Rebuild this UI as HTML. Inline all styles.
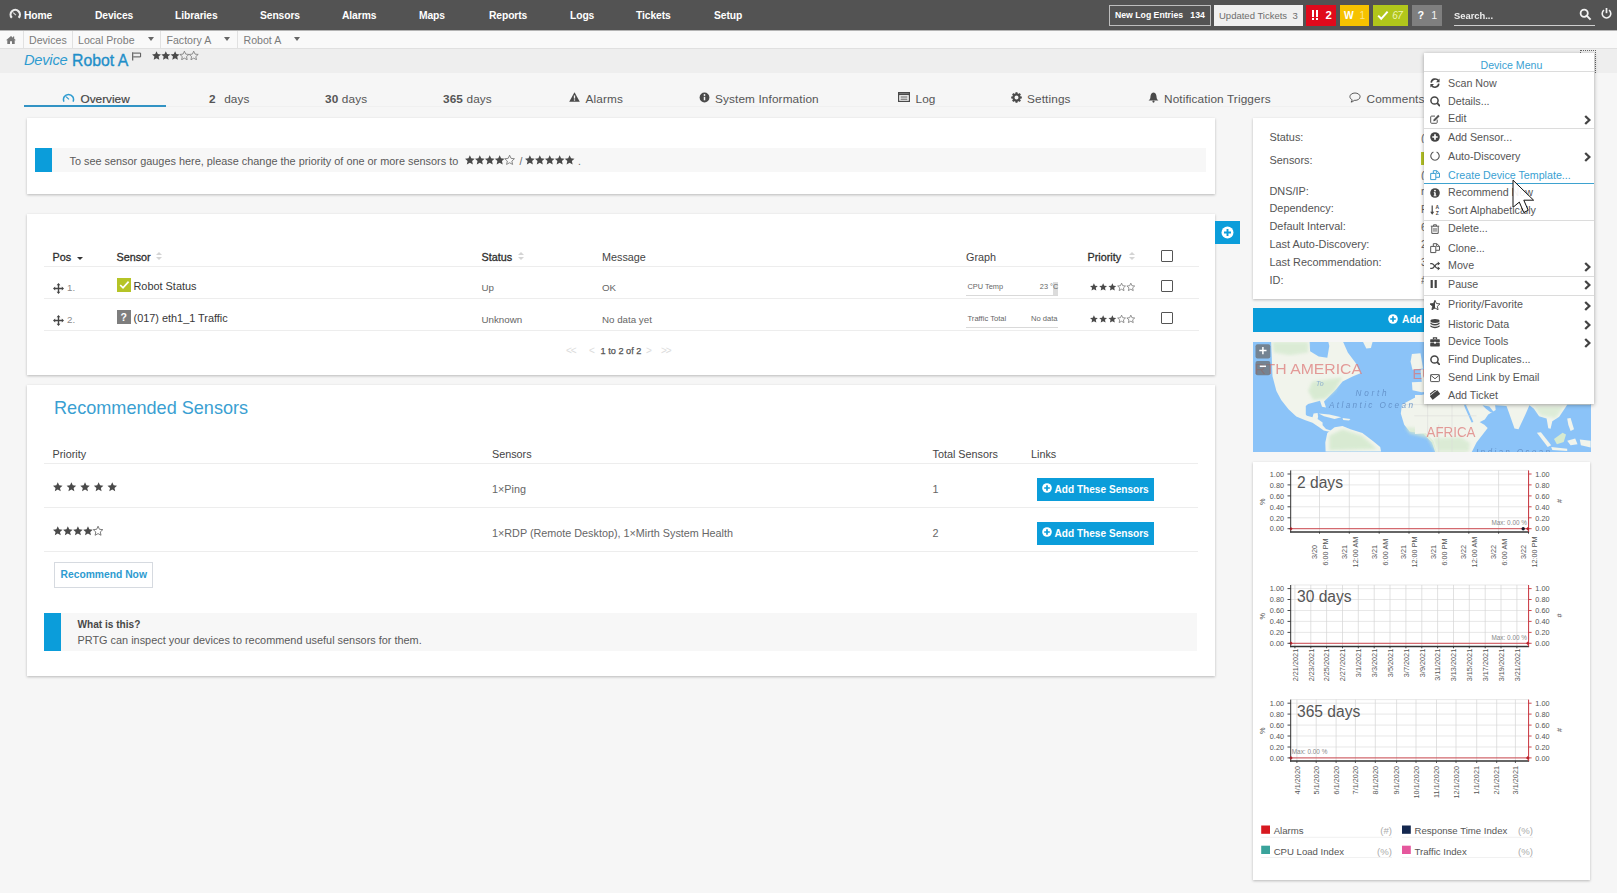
<!DOCTYPE html>
<html>
<head>
<meta charset="utf-8">
<title>Device Robot A</title>
<style>
*{box-sizing:border-box;margin:0;padding:0}
html,body{width:1617px;height:893px;overflow:hidden}
body{font-family:"Liberation Sans",sans-serif;background:#f6f6f6;color:#4d4d4d;font-size:11px;position:relative}
.abs{position:absolute}
.t{position:absolute;white-space:nowrap;line-height:1}
/* top bar */
#topbar{position:absolute;left:0;top:0;width:1617px;height:30px;background:#535353;box-shadow:0 1px 0 #b4b4b4}
#topbar .nav{position:absolute;top:10.6px;color:#fff;font-size:10.3px;font-weight:bold;white-space:nowrap;line-height:1;letter-spacing:-0.1px}
.pill{position:absolute;top:6px;height:19px;font-size:9.5px;line-height:19px;white-space:nowrap;color:#fff;font-weight:bold}
/* breadcrumb */
#crumb{position:absolute;left:0;top:31px;width:1617px;height:18px;background:#f9f9f9;border-bottom:1px solid #e0e0e0}
#crumb .c{position:absolute;top:4.3px;font-size:10.6px;color:#7b7b7b;white-space:nowrap;line-height:1}
#crumb .sep{position:absolute;top:0;width:1px;height:17px;background:#e1e1e1}
#titleband{position:absolute;left:0;top:49px;width:1617px;height:24px;background:#eeeeee}
.arr{position:absolute;top:6.3px;width:0;height:0;border-left:3px solid transparent;border-right:3px solid transparent;border-top:4px solid #666}
.card{position:absolute;background:#fff;box-shadow:0 1px 2.5px rgba(0,0,0,.25)}
.tab{position:absolute;top:93.7px;font-size:11.8px;letter-spacing:0.12px;color:#555;white-space:nowrap;line-height:1}
.hl{position:absolute;height:1px;background:#ededed}
.th{position:absolute;font-size:10.8px;color:#444;white-space:nowrap;line-height:1}
.td{position:absolute;font-size:9.75px;color:#666;white-space:nowrap;line-height:1}
.th.b{color:#2e2e2e;-webkit-text-stroke:0.3px #2e2e2e}
.sorti{position:absolute;width:6px;height:9px}
.sorti:before{content:"";position:absolute;left:0;top:0;border-left:3px solid transparent;border-right:3px solid transparent;border-bottom:3.5px solid #d4d4d4}
.sorti:after{content:"";position:absolute;left:0;top:5px;border-left:3px solid transparent;border-right:3px solid transparent;border-top:3.5px solid #d4d4d4}
.cb{position:absolute;width:12px;height:12px;border:1.4px solid #555;border-radius:1px;background:#fff}
.btn{width:117.5px;height:23px;background:#0b9dda}
.mi{position:absolute;left:1448px;font-size:10.5px;color:#555;white-space:nowrap;line-height:1}
.lbl{position:absolute;left:1269.5px;font-size:10.9px;color:#555;white-space:nowrap;line-height:1}
</style>
</head>
<body>
<svg width="0" height="0" style="position:absolute"><defs>
<path id="star" d="M4.5 0.2 L5.8 3.1 L9 3.45 L6.6 5.6 L7.3 8.75 L4.5 7.15 L1.7 8.75 L2.4 5.6 L0 3.45 L3.2 3.1 Z"/>
<g id="move"><path d="M5.5 0 L7.4 2.2 L6.2 2.2 L6.2 4.8 L8.8 4.8 L8.8 3.6 L11 5.5 L8.8 7.4 L8.8 6.2 L6.2 6.2 L6.2 8.8 L7.4 8.8 L5.5 11 L3.6 8.8 L4.8 8.8 L4.8 6.2 L2.2 6.2 L2.2 7.4 L0 5.5 L2.2 3.6 L2.2 4.8 L4.8 4.8 L4.8 2.2 L3.6 2.2 Z" fill="#444"/></g>
<g id="plusc"><circle cx="5" cy="5" r="4.8" fill="#fff"/><path d="M5 2.2 L5 7.8 M2.2 5 L7.8 5" stroke="#0b9dda" stroke-width="1.7"/></g>
</defs></svg>

<!-- TOP BAR -->
<div id="topbar">
  <div class="nav" style="left:24px">Home</div>
  <div class="nav" style="left:95px">Devices</div>
  <div class="nav" style="left:175px">Libraries</div>
  <div class="nav" style="left:260px">Sensors</div>
  <div class="nav" style="left:342px">Alarms</div>
  <div class="nav" style="left:419px">Maps</div>
  <div class="nav" style="left:489px">Reports</div>
  <div class="nav" style="left:570px">Logs</div>
  <div class="nav" style="left:636px">Tickets</div>
  <div class="nav" style="left:714px">Setup</div>
  <!-- home gauge icon -->
  <svg class="abs" style="left:8px;top:8px" width="14" height="13" viewBox="0 0 14 13"><path d="M3.85 9.77 A4.65 4.65 0 1 1 10.65 9.77" fill="none" stroke="#ececec" stroke-width="2.2"/><path d="M5.2 4.6 L7.9 7.1" stroke="#dcdcdc" stroke-width="1.2"/></svg>
  <div class="pill" style="left:1109px;width:102px;border:1px solid #bdbdbd;top:5px;height:21px;line-height:19px;padding-left:5px;font-size:8.7px">New Log Entries&nbsp;&nbsp;&nbsp;134</div>
  <div class="pill" style="left:1214px;width:89px;background:#f0f0f0;color:#6d6d6d;font-weight:normal;padding-left:5px;top:5px;height:21px;line-height:21px">Updated Tickets&nbsp;&nbsp;3</div>
  <div class="abs" style="left:1306px;top:5px;width:30px;height:20.5px;background:#e00a1c"></div>
  <div class="abs" style="left:1312px;top:10px;width:2.4px;height:6.6px;background:#fff"></div><div class="abs" style="left:1312px;top:17.8px;width:2.4px;height:2.4px;background:#fff"></div>
  <div class="abs" style="left:1315.8px;top:10px;width:2.4px;height:6.6px;background:#fff"></div><div class="abs" style="left:1315.8px;top:17.8px;width:2.4px;height:2.4px;background:#fff"></div>
  <div class="t" style="left:1325.6px;top:10.2px;font-size:11.4px;font-weight:bold;color:#fff">2</div>
  <div class="abs" style="left:1340px;top:5px;width:29px;height:20.5px;background:#f6c200"></div>
  <div class="t" style="left:1344px;top:10.8px;font-size:10.3px;font-weight:bold;color:#fff">W</div>
  <div class="t" style="left:1359.6px;top:10.8px;font-size:10.3px;color:#fbe58a">1</div>
  <div class="abs" style="left:1373px;top:5px;width:35px;height:20.5px;background:#b1c61b"></div>
  <svg class="abs" style="left:1376.5px;top:10px" width="12" height="11" viewBox="0 0 12 11"><path d="M1.2 5.6 L4.2 8.8 L10.6 1.6" fill="none" stroke="#fff" stroke-width="2"/></svg>
  <div class="t" style="left:1392.3px;top:11px;font-size:10px;color:#eef3b4;font-style:italic;letter-spacing:-0.5px">67</div>
  <div class="abs" style="left:1411.5px;top:5px;width:30.5px;height:20.5px;background:#7f7f7f"></div>
  <div class="t" style="left:1417.6px;top:10.4px;font-size:10.8px;font-weight:bold;color:#fff">?</div>
  <div class="t" style="left:1431.2px;top:10.4px;font-size:10.8px;color:#f2f2f2">1</div>
  <div class="t" style="left:1454px;top:11px;color:#fff;font-size:9.4px;font-weight:bold;opacity:.9">Search...</div>
  <div class="abs" style="left:1454px;top:25px;width:141px;height:1px;background:#cfcfcf"></div>
  <svg class="abs" style="left:1579px;top:8px" width="13" height="13" viewBox="0 0 13 13"><circle cx="5.2" cy="5.2" r="3.6" fill="none" stroke="#f2f2f2" stroke-width="1.8"/><path d="M7.9 7.9 L11.6 11.6" stroke="#f2f2f2" stroke-width="2"/></svg>
  <svg class="abs" style="left:1600px;top:7px" width="13" height="13" viewBox="0 0 13 13"><path d="M4 3.2 A4.3 4.3 0 1 0 9 3.2" fill="none" stroke="#f2f2f2" stroke-width="1.6"/><path d="M6.5 1 L6.5 6.2" stroke="#f2f2f2" stroke-width="1.7"/></svg>
</div>

<!-- BREADCRUMB -->
<div id="crumb">
  <svg class="abs" style="left:6px;top:4.5px" width="10" height="8" viewBox="0 0 10 8"><path d="M5 0 L0 4.2 L1.3 4.2 L1.3 8 L4 8 L4 5.2 L6 5.2 L6 8 L8.7 8 L8.7 4.2 L10 4.2 L8.2 2.7 L8.2 0.6 L7 0.6 L7 1.7 Z" fill="#777"/></svg>
  <div class="sep" style="left:23px"></div>
  <div class="sep" style="left:72px"></div>
  <div class="sep" style="left:160px"></div>
  <div class="sep" style="left:237px"></div>
  <div class="c" style="left:29px">Devices</div>
  <div class="c" style="left:78px">Local Probe</div>
  <div class="c" style="left:166.5px">Factory A</div>
  <div class="c" style="left:243.5px">Robot A</div>
  <div class="arr" style="left:147.5px"></div>
  <div class="arr" style="left:224px"></div>
  <div class="arr" style="left:293.5px"></div>
</div>
<div id="titleband"></div>
<div class="t" style="left:24px;top:53px;font-size:14.7px;color:#2d9bd0;letter-spacing:-0.25px"><i>Device</i></div><div class="t" style="left:72px;top:52.6px;font-size:15.8px;color:#1f8fc9;-webkit-text-stroke:0.35px #1f8fc9">Robot A</div>
<!-- flag -->
<svg class="abs" style="left:132px;top:52px" width="10" height="9" viewBox="0 0 10 9"><path d="M0.7 0.3 L0.7 8.6" stroke="#555" stroke-width="1.1"/><path d="M1.2 1.1 L8.6 1.1 L8.6 4.9 L1.2 4.9" fill="none" stroke="#555" stroke-width="1"/></svg>
<!-- title stars -->
<svg class="abs" style="left:152px;top:51px" width="47" height="9" viewBox="0 0 47 9">
 <g fill="#4a4a4a"><use href="#star" x="0"/><use href="#star" x="9.3"/><use href="#star" x="18.6"/></g>
 <g fill="none" stroke="#777" stroke-width="0.8"><use href="#star" x="27.9"/><use href="#star" x="37.2"/></g>
</svg>

<!-- TABS -->
<svg class="abs" style="left:62px;top:92px" width="13" height="12" viewBox="0 0 13 12"><path d="M2 9.6 A5 5 0 1 1 11 9.6" fill="none" stroke="#2d9bd0" stroke-width="1.5"/><path d="M4 4.6 L7 7.4" stroke="#2d9bd0" stroke-width="1.2"/></svg>
<div class="tab" style="left:80.5px;color:#444;-webkit-text-stroke:0.18px #444;letter-spacing:0">Overview</div>
<div class="abs" style="left:166px;top:106px;width:1258px;height:1px;background:#f0f0f0"></div>
<div class="abs" style="left:24px;top:105px;width:142px;height:2px;background:#3293c4"></div>
<div class="tab" style="left:209px"><b>2</b><span style="display:inline-block;width:8.5px"></span>days</div>
<div class="tab" style="left:325px"><b>30</b> days</div>
<div class="tab" style="left:443px"><b>365</b> days</div>
<svg class="abs" style="left:568.5px;top:92px" width="11" height="10" viewBox="0 0 11 10"><path d="M5.5 0.3 L10.8 9.7 L0.2 9.7 Z" fill="#4a4a4a"/><path d="M5.5 3.4 L5.5 6.6" stroke="#f5f5f5" stroke-width="1.3"/><circle cx="5.5" cy="8.1" r="0.75" fill="#f5f5f5"/></svg>
<div class="tab" style="left:585.5px">Alarms</div>
<svg class="abs" style="left:699px;top:92px" width="11" height="11" viewBox="0 0 11 11"><circle cx="5.5" cy="5.5" r="4.9" fill="#4a4a4a"/><path d="M5.5 4.8 L5.5 8.3" stroke="#f5f5f5" stroke-width="1.5"/><circle cx="5.5" cy="3" r="0.9" fill="#f5f5f5"/></svg>
<div class="tab" style="left:715px">System Information</div>
<svg class="abs" style="left:898px;top:92px" width="12" height="10" viewBox="0 0 12 10"><rect x="0.6" y="0.6" width="10.8" height="8.8" fill="none" stroke="#4a4a4a" stroke-width="1.2"/><path d="M0.6 2.2 L11.4 2.2" stroke="#4a4a4a" stroke-width="1.8"/><path d="M2.6 5 L9.4 5 M2.6 7.2 L9.4 7.2" stroke="#4a4a4a" stroke-width="0.9"/></svg>
<div class="tab" style="left:915.5px">Log</div>
<svg class="abs" style="left:1011px;top:92px" width="11" height="11" viewBox="0 0 11 11"><circle cx="5.5" cy="5.5" r="3.1" fill="none" stroke="#4a4a4a" stroke-width="2.2"/><g stroke="#4a4a4a" stroke-width="2"><path d="M5.5 0.2 L5.5 2"/><path d="M5.5 9 L5.5 10.8"/><path d="M0.2 5.5 L2 5.5"/><path d="M9 5.5 L10.8 5.5"/><path d="M1.75 1.75 L3 3"/><path d="M8 8 L9.25 9.25"/><path d="M1.75 9.25 L3 8"/><path d="M8 3 L9.25 1.75"/></g></svg>
<div class="tab" style="left:1027px">Settings</div>
<svg class="abs" style="left:1148px;top:92px" width="11" height="11" viewBox="0 0 11 11"><path d="M5.5 0.4 C3 0.8 2.5 3 2.4 5.2 C2.3 7 1.5 7.8 0.5 8.6 L10.5 8.6 C9.5 7.8 8.7 7 8.6 5.2 C8.5 3 8 0.8 5.5 0.4 Z" fill="#4a4a4a"/><circle cx="5.5" cy="9.6" r="1.1" fill="#4a4a4a"/></svg>
<div class="tab" style="left:1164px">Notification Triggers</div>
<svg class="abs" style="left:1349px;top:92px" width="12" height="11" viewBox="0 0 12 11"><path d="M6 1 C3.2 1 0.9 2.6 0.9 4.7 C0.9 6 1.8 7.1 3.2 7.8 C3.1 8.6 2.7 9.4 2 10.1 C3.3 9.9 4.5 9.3 5.2 8.4 C5.5 8.4 5.7 8.4 6 8.4 C8.8 8.4 11.1 6.8 11.1 4.7 C11.1 2.6 8.8 1 6 1 Z" fill="none" stroke="#4a4a4a" stroke-width="0.9"/></svg>
<div class="tab" style="left:1366.5px">Comments</div>

<!-- CARDS -->
<!-- card 1 -->
<div class="card" style="left:27px;top:118px;width:1188px;height:76px"></div>
<div class="abs" style="left:52px;top:148px;width:1154px;height:24px;background:#f7f7f7"></div>
<div class="abs" style="left:35px;top:148px;width:17px;height:24px;background:#0b9dda"></div>
<div class="t" style="left:69.5px;top:155.5px;font-size:10.88px;color:#5a5a5a">To see sensor gauges here, please change the priority of one or more sensors to</div>
<svg class="abs" style="left:465px;top:154.5px" width="50" height="10" viewBox="0 0 50 10"><g transform="scale(1.08)">
 <g fill="#4a4a4a"><use href="#star" x="0"/><use href="#star" x="9.2"/><use href="#star" x="18.4"/><use href="#star" x="27.6"/></g>
 <g fill="none" stroke="#777" stroke-width="0.8"><use href="#star" x="36.8"/></g></g>
</svg>
<div class="t" style="left:519.5px;top:156px;font-size:10.5px;color:#666">/</div>
<svg class="abs" style="left:525px;top:154.5px" width="51" height="10" viewBox="0 0 51 10"><g transform="scale(1.08)">
 <g fill="#4a4a4a"><use href="#star" x="0"/><use href="#star" x="9.2"/><use href="#star" x="18.4"/><use href="#star" x="27.6"/><use href="#star" x="36.8"/></g></g>
</svg>
<div class="t" style="left:578px;top:156px;font-size:10.5px;color:#666">.</div>

<!-- card 2 : sensor table -->
<div class="card" style="left:27px;top:214px;width:1188px;height:161px"></div>
<div class="th b" style="left:52.5px;top:251.8px">Pos</div>
<div class="abs" style="left:76.5px;top:256.5px;width:0;height:0;border-left:3px solid transparent;border-right:3px solid transparent;border-top:3.5px solid #333"></div>
<div class="th b" style="left:116.5px;top:251.8px">Sensor</div>
<div class="sorti" style="left:156px;top:251.5px"></div>
<div class="th b" style="left:481.5px;top:251.8px">Status</div>
<div class="sorti" style="left:518px;top:251.5px"></div>
<div class="th" style="left:602px;top:251.8px">Message</div>
<div class="th" style="left:966px;top:251.8px">Graph</div>
<div class="th b" style="left:1087.5px;top:251.8px">Priority</div>
<div class="sorti" style="left:1128.5px;top:251.5px"></div>
<div class="cb" style="left:1160.5px;top:249.5px"></div>
<div class="hl" style="left:44px;top:266px;width:1155px"></div>
<div class="hl" style="left:44px;top:298px;width:1155px"></div>
<div class="hl" style="left:44px;top:330px;width:1155px"></div>
<!-- row1 -->
<svg class="abs" style="left:53px;top:283px" width="11" height="11" viewBox="0 0 11 11"><use href="#move"/></svg>
<div class="td" style="left:67px;top:283px;color:#8a8a8a">1.</div>
<div class="abs" style="left:116.5px;top:278px;width:14.5px;height:14px;background:#b5c427"></div>
<svg class="abs" style="left:118.5px;top:280px" width="11" height="10" viewBox="0 0 11 10"><path d="M1.2 5 L4 7.8 L9.6 1.6" fill="none" stroke="#fff" stroke-width="1.7"/></svg>
<div class="td" style="left:133.5px;top:281.2px;color:#383838;font-size:10.9px">Robot Status</div>
<div class="td" style="left:481.5px;top:283.1px">Up</div>
<div class="td" style="left:602px;top:283.1px">OK</div>
<div class="abs" style="left:1053px;top:282px;width:5px;height:13px;background:#dcdcdc"></div>
<div class="t" style="left:967.5px;top:283px;font-size:7.4px;color:#666">CPU Temp</div>
<div class="t" style="left:1039.8px;top:283px;font-size:7.4px;color:#666">23 &deg;C</div>
<div class="abs" style="left:966px;top:295px;width:92px;height:1px;background:#d9d9d9"></div>
<svg class="abs" style="left:1089.5px;top:283px" width="46" height="9" viewBox="0 0 46 9"><g transform="scale(0.87)">
 <g fill="#4a4a4a"><use href="#star" x="0"/><use href="#star" x="10.6"/><use href="#star" x="21.2"/></g>
 <g fill="none" stroke="#777" stroke-width="0.9"><use href="#star" x="31.8"/><use href="#star" x="42.4"/></g></g>
</svg>
<div class="cb" style="left:1160.5px;top:279.5px"></div>
<!-- row2 -->
<svg class="abs" style="left:53px;top:315px" width="11" height="11" viewBox="0 0 11 11"><use href="#move"/></svg>
<div class="td" style="left:67px;top:315px;color:#8a8a8a">2.</div>
<div class="abs" style="left:116.5px;top:310px;width:14.5px;height:14px;background:#7e7e7e"></div>
<div class="t" style="left:120.5px;top:311.5px;font-size:10.5px;font-weight:bold;color:#fff">?</div>
<div class="td" style="left:133.5px;top:313.1px;color:#383838;font-size:10.9px">(017) eth1_1 Traffic</div>
<div class="td" style="left:481.5px;top:314.8px">Unknown</div>
<div class="td" style="left:602px;top:314.8px">No data yet</div>
<div class="t" style="left:967.5px;top:314.5px;font-size:7.6px;color:#666">Traffic Total</div>
<div class="t" style="left:1031px;top:314.5px;font-size:7.6px;color:#666">No data</div>
<div class="abs" style="left:966px;top:327px;width:92px;height:1px;background:#d9d9d9"></div>
<svg class="abs" style="left:1089.5px;top:315px" width="46" height="9" viewBox="0 0 46 9"><g transform="scale(0.87)">
 <g fill="#4a4a4a"><use href="#star" x="0"/><use href="#star" x="10.6"/><use href="#star" x="21.2"/></g>
 <g fill="none" stroke="#777" stroke-width="0.9"><use href="#star" x="31.8"/><use href="#star" x="42.4"/></g></g>
</svg>
<div class="cb" style="left:1160.5px;top:311.5px"></div>
<!-- pager -->
<div class="t" style="left:566px;top:345.5px;font-size:10px;color:#dcdcdc;letter-spacing:-1px">&lt;&lt;</div>
<div class="t" style="left:589px;top:345.5px;font-size:10px;color:#dcdcdc">&lt;</div>
<div class="t" style="left:600.5px;top:347px;font-size:9.2px;color:#555;-webkit-text-stroke:0.25px #555">1 to 2 of 2</div>
<div class="t" style="left:646px;top:345.5px;font-size:10px;color:#dcdcdc">&gt;</div>
<div class="t" style="left:661px;top:345.5px;font-size:10px;color:#dcdcdc;letter-spacing:-1px">&gt;&gt;</div>
<!-- plus button -->
<div class="abs" style="left:1215px;top:221px;width:25px;height:23px;background:#0b9dda"></div>
<svg class="abs" style="left:1221px;top:226px" width="13" height="13" viewBox="0 0 13 13"><circle cx="6.5" cy="6.5" r="6" fill="#fff"/><path d="M6.5 3 L6.5 10 M3 6.5 L10 6.5" stroke="#0b9dda" stroke-width="1.9"/></svg>

<!-- card 3 : recommended sensors -->
<div class="card" style="left:27px;top:385px;width:1188px;height:291px"></div>
<div class="t" style="left:54px;top:398.5px;font-size:18.1px;color:#3a9fd2">Recommended Sensors</div>
<div class="th" style="left:52.5px;top:449.2px">Priority</div>
<div class="th" style="left:492px;top:449.2px">Sensors</div>
<div class="th" style="left:932.5px;top:449.2px">Total Sensors</div>
<div class="th" style="left:1031px;top:449.2px">Links</div>
<div class="hl" style="left:44px;top:463px;width:1154px"></div>
<div class="hl" style="left:44px;top:507px;width:1154px"></div>
<div class="hl" style="left:44px;top:551px;width:1154px"></div>
<svg class="abs" style="left:53px;top:481.5px" width="66" height="11" viewBox="0 0 66 11"><g transform="scale(1.06)" fill="#4a4a4a"><use href="#star" x="0"/><use href="#star" x="12.85"/><use href="#star" x="25.7"/><use href="#star" x="38.55"/><use href="#star" x="51.4"/></g></svg>
<div class="td" style="left:492px;top:483.5px;font-size:10.8px">1&times;Ping</div>
<div class="td" style="left:932.5px;top:483.5px;font-size:10.8px">1</div>
<svg class="abs" style="left:53px;top:525.5px" width="53" height="11" viewBox="0 0 53 11"><g transform="scale(1.06)">
 <g fill="#4a4a4a"><use href="#star" x="0"/><use href="#star" x="9.5"/><use href="#star" x="19"/><use href="#star" x="28.5"/></g>
 <g fill="none" stroke="#666" stroke-width="0.8"><use href="#star" x="38"/></g></g></svg>
<div class="td" style="left:492px;top:527.5px;font-size:10.8px">1&times;RDP (Remote Desktop), 1&times;Mirth System Health</div>
<div class="td" style="left:932.5px;top:527.5px;font-size:10.8px">2</div>
<div class="abs btn" style="left:1036.5px;top:478px"></div>
<div class="abs btn" style="left:1036.5px;top:522px"></div>
<svg class="abs" style="left:1042px;top:483px" width="10" height="10" viewBox="0 0 10 10"><use href="#plusc"/></svg>
<svg class="abs" style="left:1042px;top:527px" width="10" height="10" viewBox="0 0 10 10"><use href="#plusc"/></svg>
<div class="t" style="left:1054.5px;top:484.5px;font-size:10.1px;font-weight:bold;color:#fff">Add These Sensors</div>
<div class="t" style="left:1054.5px;top:528.5px;font-size:10.1px;font-weight:bold;color:#fff">Add These Sensors</div>
<div class="abs" style="left:54px;top:562px;width:99px;height:25.5px;border:1px solid #d6dae0;background:#fff"></div>
<div class="t" style="left:60.5px;top:569.5px;font-size:10.3px;font-weight:bold;color:#2d9bd0">Recommend Now</div>
<div class="abs" style="left:61px;top:613px;width:1136px;height:38px;background:#f7f7f7"></div>
<div class="abs" style="left:44px;top:613px;width:17px;height:38px;background:#0b9dda"></div>
<div class="t" style="left:77.5px;top:619.5px;font-size:10.1px;font-weight:bold;color:#484848">What is this?</div>
<div class="t" style="left:77.5px;top:635px;font-size:10.9px;color:#5a5a5a">PRTG can inspect your devices to recommend useful sensors for them.</div>

<!-- RIGHT COLUMN -->
<div class="card" style="left:1253px;top:118px;width:337px;height:181px"></div>
<div class="lbl" style="top:132.2px">Status:</div>
<div class="lbl" style="top:155.0px">Sensors:</div>
<div class="lbl" style="top:185.9px">DNS/IP:</div>
<div class="lbl" style="top:203.4px">Dependency:</div>
<div class="lbl" style="top:221.3px">Default Interval:</div>
<div class="lbl" style="top:239.0px">Last Auto-Discovery:</div>
<div class="lbl" style="top:256.9px">Last Recommendation:</div>
<div class="lbl" style="top:274.8px">ID:</div>
<div class="abs" style="left:1420.5px;top:151.5px;width:4px;height:13.5px;background:#b5c427"></div>
<div class="t" style="left:1421px;top:132.5px;font-size:10.5px;color:#666;width:3px;overflow:hidden">(</div>
<div class="t" style="left:1421px;top:169.6px;font-size:10.5px;color:#666;width:3px;overflow:hidden">(</div>
<div class="t" style="left:1421px;top:186.2px;font-size:10.5px;color:#666;width:3px;overflow:hidden">r</div>
<div class="t" style="left:1421px;top:203.7px;font-size:10.5px;color:#666;width:3px;overflow:hidden">F</div>
<div class="t" style="left:1421px;top:221.6px;font-size:10.5px;color:#666;width:3px;overflow:hidden">6</div>
<div class="t" style="left:1421px;top:239.3px;font-size:10.5px;color:#666;width:3px;overflow:hidden">2</div>
<div class="t" style="left:1421px;top:257.2px;font-size:10.5px;color:#666;width:3px;overflow:hidden">3</div>
<div class="t" style="left:1421px;top:275.1px;font-size:10.5px;color:#666;width:3px;overflow:hidden">#</div>
<div class="abs" style="left:1253px;top:308px;width:337px;height:23.5px;background:#0b9dda"></div>
<svg class="abs" style="left:1387.5px;top:313.5px" width="10" height="10" viewBox="0 0 10 10"><use href="#plusc"/></svg>
<div class="t" style="left:1402px;top:315px;font-size:10.3px;font-weight:bold;color:#fff">Add Sensor</div>
<!-- MAP -->
<div id="map" class="abs" style="left:1253px;top:342px;width:338px;height:110px;background:#8bc3f8;overflow:hidden"><!--MAPSVG--><svg class="abs" style="left:0;top:0" width="338" height="110" viewBox="1253 342 338 110" font-family="Liberation Sans, sans-serif">
<defs><filter id="bl" x="-5%" y="-5%" width="110%" height="110%"><feGaussianBlur stdDeviation="0.55"/></filter><filter id="bl2"><feGaussianBlur stdDeviation="1.6"/></filter></defs>
<rect x="1253" y="342" width="338" height="110" fill="#8bc3f8"/>
<g filter="url(#bl)">
<path d="M1271.1 340.6 L1309.5 340.6 L1310.1 351.2 L1318.7 356.5 L1327.3 357.8 L1329.3 345.9 L1328.0 340.6 L1342.5 340.6 L1347.8 352.5 L1355.7 363.1 L1361.0 373.0 L1353.1 376.3 L1342.5 381.6 L1335.9 389.5 L1328.0 397.5 L1324.0 401.4 L1326.0 407.4 L1322.0 406.7 L1320.0 400.8 L1308.1 404.1 L1305.8 406.0 L1305.8 414.5 L1306.9 415.7 L1312.5 417.3 L1313.6 413.4 L1317.6 412.9 L1318.1 416.8 L1317.6 419.0 L1322.6 422.4 L1322.6 425.2 L1326.0 429.1 L1330.0 430.2 L1332.0 431.8 L1328.2 431.6 L1323.7 430.5 L1319.2 427.2 L1312.5 422.7 L1304.7 419.9 L1296.3 416.4 L1288.5 409.2 L1281.2 400.0 L1276.4 390.9 L1272.5 376.3 Z" fill="#f1f4ec" />
<path d="M1272.5 342.0 L1308.1 342.0 L1308.1 352.5 L1289.6 355.2 L1273.8 352.5 Z" fill="#d6ead0" opacity="0.8" filter="url(#bl2)"/>
<path d="M1312.1 381.6 L1342.5 377.6 L1334.6 390.9 L1325.3 398.8 L1313.4 400.1 L1308.1 390.9 Z" fill="#d6ead0" opacity="0.9" filter="url(#bl2)"/>
<path d="M1362.3 340.6 L1372.9 340.6 L1370.9 347.9 L1366.3 348.6 Z" fill="#f1f4ec" />
<path d="M1331.9 340.6 L1342.5 340.6 L1341.2 345.9 L1334.6 349.9 Z" fill="#f1f4ec" />
<path d="M1318.7 413.6 L1329.3 414.4 L1341.2 417.3 L1334.6 418.9 L1324.0 416.2 Z" fill="#f1f4ec" />
<path d="M1342.5 418.0 L1350.4 418.9 L1349.1 420.6 L1343.2 419.9 Z" fill="#f1f4ec" />
<path d="M1325.3 442.4 L1327.3 433.1 L1334.6 427.2 L1342.5 425.9 L1350.4 429.2 L1362.3 433.1 L1372.9 441.1 L1380.2 447.0 L1381.1 451.4 L1325.6 451.4 Z" fill="#f1f4ec" />
<path d="M1329.3 435.8 L1342.5 429.2 L1362.3 435.8 L1376.9 449.0 L1329.3 450.3 Z" fill="#d6ead0" opacity="0.9" filter="url(#bl2)"/>
<path d="M1411.9 353.9 L1420.5 353.2 L1423.1 368.4 L1412.5 369.7 L1410.6 361.8 Z" fill="#f1f4ec" />
<path d="M1411.9 382.3 L1430.0 381.6 L1430.0 391.5 L1421.8 392.2 L1412.5 390.2 Z" fill="#f1f4ec" />
<path d="M1420.5 369.7 L1430.0 368.4 L1430.0 382.3 L1421.8 382.3 Z" fill="#f1f4ec" />
<path d="M1402.0 404.6 L1414.2 398.0 L1423.1 394.6 L1467.6 394.6 L1469.9 404.6 L1476.5 420.2 L1484.3 424.7 L1487.7 428.0 L1476.5 442.5 L1469.9 455.8 L1436.5 455.8 L1432.0 442.5 L1423.1 433.6 L1409.7 431.4 L1404.2 424.7 L1400.8 413.5 Z" fill="#f1f4ec" />
<path d="M1405.3 426.9 L1467.6 431.4 L1465.4 453.6 L1436.5 453.6 L1427.6 438.0 L1409.7 433.6 Z" fill="#d6ead0" opacity="0.75" filter="url(#bl2)"/>
<path d="M1415.0 395.0 L1590.6 395.0 L1590.6 404.7 L1567.2 404.7 L1559.2 416.7 L1552.3 421.3 L1550.6 428.8 L1548.3 428.2 L1546.6 418.5 L1539.1 416.2 L1534.0 408.7 L1529.4 405.3 L1525.4 414.5 L1518.5 429.3 L1514.5 428.4 L1508.8 412.2 L1506.5 405.9 L1495.1 405.3 L1495.7 409.9 L1488.2 414.5 L1484.8 419.6 L1475.6 424.2 L1472.2 421.9 L1465.3 405.3 L1415.0 405.3 Z" fill="#f1f4ec" />
<path d="M1463.6 404.7 L1465.9 404.7 L1473.4 421.9 L1471.6 422.5 Z" fill="#8bc3f8" />
<path d="M1482.5 405.3 L1489.4 406.4 L1493.9 412.2 L1490.5 412.2 L1485.9 408.7 Z" fill="#8bc3f8" />
<path d="M1464.2 421.3 L1472.2 423.6 L1483.6 425.7 L1479.1 432.8 L1472.2 443.1 L1470.5 451.6 L1436.7 451.6 L1433.3 440.8 L1425.9 433.3 L1415.0 433.9 L1415.0 404.7 L1464.2 404.7 Z" fill="#f1f4ec" />
<path d="M1433.3 438.5 L1460.8 437.3 L1469.9 443.1 L1468.8 451.6 L1437.9 451.6 Z" fill="#d6ead0" opacity="0.8" filter="url(#bl2)"/>
<path d="M1534.0 406.4 L1563.7 406.4 L1555.7 417.9 L1540.9 415.6 Z" fill="#d6ead0" opacity="0.7" filter="url(#bl2)"/>
<path d="M1536.9 432.8 L1540.9 432.2 L1551.2 445.3 L1547.7 447.1 Z" fill="#f1f4ec" />
<path d="M1554.0 439.1 L1562.6 432.8 L1566.0 434.5 L1563.7 441.9 L1556.9 444.2 Z" fill="#d6ead0" />
<path d="M1567.2 418.5 L1570.6 417.9 L1574.0 429.3 L1570.6 431.0 L1568.3 424.7 Z" fill="#f1f4ec" />
<path d="M1551.2 447.1 L1567.2 448.8 L1567.2 451.1 L1552.3 449.9 Z" fill="#f1f4ec" />
<path d="M1567.2 440.8 L1575.2 438.5 L1577.5 444.2 L1570.6 445.3 Z" fill="#f1f4ec" />
<path d="M1579.8 439.6 L1590.6 440.8 L1590.6 447.6 L1580.9 445.3 Z" fill="#f1f4ec" />
</g>
<g stroke="#d9d9d9" stroke-width="0.5" fill="none">
<path d="M1405.3 404.6 L1467.6 404.6"/>
<path d="M1427.6 394.6 L1427.6 433.6"/>
<path d="M1452.0 394.6 L1452.0 453.6"/>
<path d="M1414.2 415.8 L1476.5 415.8"/>
<path d="M1438.7 424.7 L1438.7 455.8"/>
</g>
<text x="1254.5" y="373.6" font-size="14.2" fill="#dd7474" opacity="0.7" textLength="107.5" lengthAdjust="spacingAndGlyphs">RTH AMERICA</text>
<text x="1412.5" y="378.5" font-size="14.2" fill="#dd7474" opacity="0.7">EU</text>
<text x="1426.5" y="437" font-size="14.2" fill="#dd7474" opacity="0.7" textLength="49" lengthAdjust="spacingAndGlyphs">AFRICA</text>
<text x="1355.5" y="396.3" font-size="8.2" font-style="italic" fill="#5f8cc4" opacity="0.85" textLength="31" lengthAdjust="spacing">North</text>
<text x="1329" y="408.2" font-size="8.2" font-style="italic" fill="#5f8cc4" opacity="0.85" textLength="84" lengthAdjust="spacing">Atlantic Ocean</text>
<text x="1476" y="454.5" font-size="8.2" font-style="italic" fill="#5f8cc4" opacity="0.85" textLength="74" lengthAdjust="spacing">Indian Ocean</text>
<text x="1316" y="385.5" font-size="7" font-style="italic" fill="#7aa0cc" opacity="0.8">To</text>
<rect x="1255.5" y="344.3" width="14.8" height="14.2" rx="2" fill="#6b6b6b" opacity="0.72"/>
<rect x="1255.5" y="361" width="14.8" height="14.2" rx="2" fill="#6b6b6b" opacity="0.72"/>
<path d="M1259.3 350.6 L1266.5 350.6 M1262.9 347 L1262.9 354.2" stroke="#fff" stroke-width="1.5"/>
<path d="M1259.8 366.3 L1266 366.3" stroke="#fff" stroke-width="1.5"/>
</svg><!--/MAPSVG--></div>
<div class="card" style="left:1253px;top:462px;width:337px;height:418px"></div>
<!--GRAPHS--><svg class="abs" style="left:1253px;top:462px" width="337" height="418" viewBox="1253 462 337 418" font-family="Liberation Sans, sans-serif">
<line x1="1290.7" x2="1528.6" y1="474.0" y2="474.0" stroke="#dedede" stroke-width="0.7"/>
<line x1="1290.7" x2="1528.6" y1="484.9" y2="484.9" stroke="#dedede" stroke-width="0.7"/>
<line x1="1290.7" x2="1528.6" y1="495.9" y2="495.9" stroke="#dedede" stroke-width="0.7"/>
<line x1="1290.7" x2="1528.6" y1="506.8" y2="506.8" stroke="#dedede" stroke-width="0.7"/>
<line x1="1290.7" x2="1528.6" y1="517.8" y2="517.8" stroke="#dedede" stroke-width="0.7"/>
<line x1="1290.7" x2="1528.6" y1="528.7" y2="528.7" stroke="#dedede" stroke-width="0.7"/>
<line x1="1290.7" x2="1528.6" y1="470.4" y2="470.4" stroke="#dedede" stroke-width="0.7"/>
<line x1="1319.5" x2="1319.5" y1="470.4" y2="531.9" stroke="#d4d4d4" stroke-width="0.7"/>
<line x1="1349.3" x2="1349.3" y1="470.4" y2="531.9" stroke="#d4d4d4" stroke-width="0.7"/>
<line x1="1379.2" x2="1379.2" y1="470.4" y2="531.9" stroke="#d4d4d4" stroke-width="0.7"/>
<line x1="1409.0" x2="1409.0" y1="470.4" y2="531.9" stroke="#d4d4d4" stroke-width="0.7"/>
<line x1="1438.9" x2="1438.9" y1="470.4" y2="531.9" stroke="#d4d4d4" stroke-width="0.7"/>
<line x1="1468.8" x2="1468.8" y1="470.4" y2="531.9" stroke="#d4d4d4" stroke-width="0.7"/>
<line x1="1498.6" x2="1498.6" y1="470.4" y2="531.9" stroke="#d4d4d4" stroke-width="0.7"/>
<line x1="1528.5" x2="1528.5" y1="470.4" y2="531.9" stroke="#d4d4d4" stroke-width="0.7"/>
<text x="1297" y="487.7" font-size="15.6" fill="#555">2 days</text>
<line x1="1290.7" x2="1290.7" y1="470.4" y2="532.6" stroke="#333" stroke-width="1"/>
<line x1="1290.2" x2="1529.1" y1="531.9" y2="531.9" stroke="#333" stroke-width="1.5"/>
<line x1="1528.6" x2="1528.6" y1="470.4" y2="531.9" stroke="#c8323c" stroke-width="1"/>
<line x1="1290.7" x2="1528.6" y1="528.7" y2="528.7" stroke="#cc3a42" stroke-width="0.9"/>
<path d="M1289.1000000000001 528.7 l1.8 -1.8 l1.8 1.8 l-1.8 1.8 z" fill="#b8222c"/>
<path d="M1526.0 528.7 l1.8 -1.8 l1.8 1.8 l-1.8 1.8 z" fill="#b8222c"/>
<line x1="1287.5" x2="1290.7" y1="474.0" y2="474.0" stroke="#333" stroke-width="0.9"/>
<line x1="1528.6" x2="1531.6" y1="474.0" y2="474.0" stroke="#c8323c" stroke-width="0.9"/>
<text x="1284" y="476.7" font-size="7.3" fill="#555" text-anchor="end">1.00</text>
<text x="1535.3" y="476.7" font-size="7.3" fill="#555">1.00</text>
<line x1="1287.5" x2="1290.7" y1="484.9" y2="484.9" stroke="#333" stroke-width="0.9"/>
<line x1="1528.6" x2="1531.6" y1="484.9" y2="484.9" stroke="#c8323c" stroke-width="0.9"/>
<text x="1284" y="487.6" font-size="7.3" fill="#555" text-anchor="end">0.80</text>
<text x="1535.3" y="487.6" font-size="7.3" fill="#555">0.80</text>
<line x1="1287.5" x2="1290.7" y1="495.9" y2="495.9" stroke="#333" stroke-width="0.9"/>
<line x1="1528.6" x2="1531.6" y1="495.9" y2="495.9" stroke="#c8323c" stroke-width="0.9"/>
<text x="1284" y="498.6" font-size="7.3" fill="#555" text-anchor="end">0.60</text>
<text x="1535.3" y="498.6" font-size="7.3" fill="#555">0.60</text>
<line x1="1287.5" x2="1290.7" y1="506.8" y2="506.8" stroke="#333" stroke-width="0.9"/>
<line x1="1528.6" x2="1531.6" y1="506.8" y2="506.8" stroke="#c8323c" stroke-width="0.9"/>
<text x="1284" y="509.5" font-size="7.3" fill="#555" text-anchor="end">0.40</text>
<text x="1535.3" y="509.5" font-size="7.3" fill="#555">0.40</text>
<line x1="1287.5" x2="1290.7" y1="517.8" y2="517.8" stroke="#333" stroke-width="0.9"/>
<line x1="1528.6" x2="1531.6" y1="517.8" y2="517.8" stroke="#c8323c" stroke-width="0.9"/>
<text x="1284" y="520.5" font-size="7.3" fill="#555" text-anchor="end">0.20</text>
<text x="1535.3" y="520.5" font-size="7.3" fill="#555">0.20</text>
<line x1="1287.5" x2="1290.7" y1="528.7" y2="528.7" stroke="#333" stroke-width="0.9"/>
<line x1="1528.6" x2="1531.6" y1="528.7" y2="528.7" stroke="#c8323c" stroke-width="0.9"/>
<text x="1284" y="531.4" font-size="7.3" fill="#555" text-anchor="end">0.00</text>
<text x="1535.3" y="531.4" font-size="7.3" fill="#555">0.00</text>
<text transform="translate(1264.5 501.7) rotate(-90)" font-size="7.3" fill="#555" text-anchor="middle">%</text>
<text transform="translate(1562.3 500.9) rotate(-90)" font-size="7.3" fill="#555" text-anchor="middle">#</text>
<line x1="1319.5" x2="1319.5" y1="531.9" y2="533.7" stroke="#333" stroke-width="0.9"/>
<text transform="translate(1316.8 552.0) rotate(-90)" font-size="7.3" fill="#555" text-anchor="middle">3/20</text>
<text transform="translate(1327.8 552.0) rotate(-90)" font-size="7.3" fill="#555" text-anchor="middle">6:00 PM</text>
<line x1="1349.3" x2="1349.3" y1="531.9" y2="533.7" stroke="#333" stroke-width="0.9"/>
<text transform="translate(1346.6 552.0) rotate(-90)" font-size="7.3" fill="#555" text-anchor="middle">3/21</text>
<text transform="translate(1357.6 552.0) rotate(-90)" font-size="7.3" fill="#555" text-anchor="middle">12:00 AM</text>
<line x1="1379.2" x2="1379.2" y1="531.9" y2="533.7" stroke="#333" stroke-width="0.9"/>
<text transform="translate(1376.5 552.0) rotate(-90)" font-size="7.3" fill="#555" text-anchor="middle">3/21</text>
<text transform="translate(1387.5 552.0) rotate(-90)" font-size="7.3" fill="#555" text-anchor="middle">6:00 AM</text>
<line x1="1409.0" x2="1409.0" y1="531.9" y2="533.7" stroke="#333" stroke-width="0.9"/>
<text transform="translate(1406.3 552.0) rotate(-90)" font-size="7.3" fill="#555" text-anchor="middle">3/21</text>
<text transform="translate(1417.3 552.0) rotate(-90)" font-size="7.3" fill="#555" text-anchor="middle">12:00 PM</text>
<line x1="1438.9" x2="1438.9" y1="531.9" y2="533.7" stroke="#333" stroke-width="0.9"/>
<text transform="translate(1436.2 552.0) rotate(-90)" font-size="7.3" fill="#555" text-anchor="middle">3/21</text>
<text transform="translate(1447.2 552.0) rotate(-90)" font-size="7.3" fill="#555" text-anchor="middle">6:00 PM</text>
<line x1="1468.8" x2="1468.8" y1="531.9" y2="533.7" stroke="#333" stroke-width="0.9"/>
<text transform="translate(1466.0 552.0) rotate(-90)" font-size="7.3" fill="#555" text-anchor="middle">3/22</text>
<text transform="translate(1477.0 552.0) rotate(-90)" font-size="7.3" fill="#555" text-anchor="middle">12:00 AM</text>
<line x1="1498.6" x2="1498.6" y1="531.9" y2="533.7" stroke="#333" stroke-width="0.9"/>
<text transform="translate(1495.9 552.0) rotate(-90)" font-size="7.3" fill="#555" text-anchor="middle">3/22</text>
<text transform="translate(1506.9 552.0) rotate(-90)" font-size="7.3" fill="#555" text-anchor="middle">6:00 AM</text>
<line x1="1528.5" x2="1528.5" y1="531.9" y2="533.7" stroke="#333" stroke-width="0.9"/>
<text transform="translate(1525.8 552.0) rotate(-90)" font-size="7.3" fill="#555" text-anchor="middle">3/22</text>
<text transform="translate(1536.8 552.0) rotate(-90)" font-size="7.3" fill="#555" text-anchor="middle">12:00 PM</text>
<text x="1527" y="524.9" font-size="6.4" fill="#888" text-anchor="end">Max: 0.00 %</text>
<circle cx="1523.2" cy="528.7" r="1.7" fill="#1a1a2a"/>
<line x1="1290.7" x2="1528.6" y1="588.6" y2="588.6" stroke="#dedede" stroke-width="0.7"/>
<line x1="1290.7" x2="1528.6" y1="599.5" y2="599.5" stroke="#dedede" stroke-width="0.7"/>
<line x1="1290.7" x2="1528.6" y1="610.5" y2="610.5" stroke="#dedede" stroke-width="0.7"/>
<line x1="1290.7" x2="1528.6" y1="621.4" y2="621.4" stroke="#dedede" stroke-width="0.7"/>
<line x1="1290.7" x2="1528.6" y1="632.4" y2="632.4" stroke="#dedede" stroke-width="0.7"/>
<line x1="1290.7" x2="1528.6" y1="643.3" y2="643.3" stroke="#dedede" stroke-width="0.7"/>
<line x1="1290.7" x2="1528.6" y1="585.0" y2="585.0" stroke="#dedede" stroke-width="0.7"/>
<line x1="1294.9" x2="1294.9" y1="585.0" y2="646.5" stroke="#d4d4d4" stroke-width="0.7"/>
<line x1="1310.8" x2="1310.8" y1="585.0" y2="646.5" stroke="#d4d4d4" stroke-width="0.7"/>
<line x1="1326.6" x2="1326.6" y1="585.0" y2="646.5" stroke="#d4d4d4" stroke-width="0.7"/>
<line x1="1342.5" x2="1342.5" y1="585.0" y2="646.5" stroke="#d4d4d4" stroke-width="0.7"/>
<line x1="1358.3" x2="1358.3" y1="585.0" y2="646.5" stroke="#d4d4d4" stroke-width="0.7"/>
<line x1="1374.2" x2="1374.2" y1="585.0" y2="646.5" stroke="#d4d4d4" stroke-width="0.7"/>
<line x1="1390.0" x2="1390.0" y1="585.0" y2="646.5" stroke="#d4d4d4" stroke-width="0.7"/>
<line x1="1405.9" x2="1405.9" y1="585.0" y2="646.5" stroke="#d4d4d4" stroke-width="0.7"/>
<line x1="1421.8" x2="1421.8" y1="585.0" y2="646.5" stroke="#d4d4d4" stroke-width="0.7"/>
<line x1="1437.6" x2="1437.6" y1="585.0" y2="646.5" stroke="#d4d4d4" stroke-width="0.7"/>
<line x1="1453.5" x2="1453.5" y1="585.0" y2="646.5" stroke="#d4d4d4" stroke-width="0.7"/>
<line x1="1469.3" x2="1469.3" y1="585.0" y2="646.5" stroke="#d4d4d4" stroke-width="0.7"/>
<line x1="1485.2" x2="1485.2" y1="585.0" y2="646.5" stroke="#d4d4d4" stroke-width="0.7"/>
<line x1="1501.0" x2="1501.0" y1="585.0" y2="646.5" stroke="#d4d4d4" stroke-width="0.7"/>
<line x1="1516.9" x2="1516.9" y1="585.0" y2="646.5" stroke="#d4d4d4" stroke-width="0.7"/>
<text x="1297" y="602.3" font-size="15.6" fill="#555">30 days</text>
<line x1="1290.7" x2="1290.7" y1="585.0" y2="647.2" stroke="#333" stroke-width="1"/>
<line x1="1290.2" x2="1529.1" y1="646.5" y2="646.5" stroke="#333" stroke-width="1.5"/>
<line x1="1528.6" x2="1528.6" y1="585.0" y2="646.5" stroke="#c8323c" stroke-width="1"/>
<line x1="1290.7" x2="1528.6" y1="643.3" y2="643.3" stroke="#cc3a42" stroke-width="0.9"/>
<path d="M1289.1000000000001 643.3 l1.8 -1.8 l1.8 1.8 l-1.8 1.8 z" fill="#b8222c"/>
<path d="M1526.0 643.3 l1.8 -1.8 l1.8 1.8 l-1.8 1.8 z" fill="#b8222c"/>
<line x1="1287.5" x2="1290.7" y1="588.6" y2="588.6" stroke="#333" stroke-width="0.9"/>
<line x1="1528.6" x2="1531.6" y1="588.6" y2="588.6" stroke="#c8323c" stroke-width="0.9"/>
<text x="1284" y="591.3" font-size="7.3" fill="#555" text-anchor="end">1.00</text>
<text x="1535.3" y="591.3" font-size="7.3" fill="#555">1.00</text>
<line x1="1287.5" x2="1290.7" y1="599.5" y2="599.5" stroke="#333" stroke-width="0.9"/>
<line x1="1528.6" x2="1531.6" y1="599.5" y2="599.5" stroke="#c8323c" stroke-width="0.9"/>
<text x="1284" y="602.2" font-size="7.3" fill="#555" text-anchor="end">0.80</text>
<text x="1535.3" y="602.2" font-size="7.3" fill="#555">0.80</text>
<line x1="1287.5" x2="1290.7" y1="610.5" y2="610.5" stroke="#333" stroke-width="0.9"/>
<line x1="1528.6" x2="1531.6" y1="610.5" y2="610.5" stroke="#c8323c" stroke-width="0.9"/>
<text x="1284" y="613.2" font-size="7.3" fill="#555" text-anchor="end">0.60</text>
<text x="1535.3" y="613.2" font-size="7.3" fill="#555">0.60</text>
<line x1="1287.5" x2="1290.7" y1="621.4" y2="621.4" stroke="#333" stroke-width="0.9"/>
<line x1="1528.6" x2="1531.6" y1="621.4" y2="621.4" stroke="#c8323c" stroke-width="0.9"/>
<text x="1284" y="624.1" font-size="7.3" fill="#555" text-anchor="end">0.40</text>
<text x="1535.3" y="624.1" font-size="7.3" fill="#555">0.40</text>
<line x1="1287.5" x2="1290.7" y1="632.4" y2="632.4" stroke="#333" stroke-width="0.9"/>
<line x1="1528.6" x2="1531.6" y1="632.4" y2="632.4" stroke="#c8323c" stroke-width="0.9"/>
<text x="1284" y="635.1" font-size="7.3" fill="#555" text-anchor="end">0.20</text>
<text x="1535.3" y="635.1" font-size="7.3" fill="#555">0.20</text>
<line x1="1287.5" x2="1290.7" y1="643.3" y2="643.3" stroke="#333" stroke-width="0.9"/>
<line x1="1528.6" x2="1531.6" y1="643.3" y2="643.3" stroke="#c8323c" stroke-width="0.9"/>
<text x="1284" y="646.0" font-size="7.3" fill="#555" text-anchor="end">0.00</text>
<text x="1535.3" y="646.0" font-size="7.3" fill="#555">0.00</text>
<text transform="translate(1264.5 616.2) rotate(-90)" font-size="7.3" fill="#555" text-anchor="middle">%</text>
<text transform="translate(1562.3 615.5) rotate(-90)" font-size="7.3" fill="#555" text-anchor="middle">#</text>
<line x1="1294.9" x2="1294.9" y1="646.5" y2="648.3" stroke="#333" stroke-width="0.9"/>
<text transform="translate(1297.6 648.8) rotate(-90)" font-size="7.3" fill="#555" text-anchor="end">2/21/2021</text>
<line x1="1310.8" x2="1310.8" y1="646.5" y2="648.3" stroke="#333" stroke-width="0.9"/>
<text transform="translate(1313.5 648.8) rotate(-90)" font-size="7.3" fill="#555" text-anchor="end">2/23/2021</text>
<line x1="1326.6" x2="1326.6" y1="646.5" y2="648.3" stroke="#333" stroke-width="0.9"/>
<text transform="translate(1329.3 648.8) rotate(-90)" font-size="7.3" fill="#555" text-anchor="end">2/25/2021</text>
<line x1="1342.5" x2="1342.5" y1="646.5" y2="648.3" stroke="#333" stroke-width="0.9"/>
<text transform="translate(1345.2 648.8) rotate(-90)" font-size="7.3" fill="#555" text-anchor="end">2/27/2021</text>
<line x1="1358.3" x2="1358.3" y1="646.5" y2="648.3" stroke="#333" stroke-width="0.9"/>
<text transform="translate(1361.0 648.8) rotate(-90)" font-size="7.3" fill="#555" text-anchor="end">3/1/2021</text>
<line x1="1374.2" x2="1374.2" y1="646.5" y2="648.3" stroke="#333" stroke-width="0.9"/>
<text transform="translate(1376.9 648.8) rotate(-90)" font-size="7.3" fill="#555" text-anchor="end">3/3/2021</text>
<line x1="1390.0" x2="1390.0" y1="646.5" y2="648.3" stroke="#333" stroke-width="0.9"/>
<text transform="translate(1392.7 648.8) rotate(-90)" font-size="7.3" fill="#555" text-anchor="end">3/5/2021</text>
<line x1="1405.9" x2="1405.9" y1="646.5" y2="648.3" stroke="#333" stroke-width="0.9"/>
<text transform="translate(1408.6 648.8) rotate(-90)" font-size="7.3" fill="#555" text-anchor="end">3/7/2021</text>
<line x1="1421.8" x2="1421.8" y1="646.5" y2="648.3" stroke="#333" stroke-width="0.9"/>
<text transform="translate(1424.5 648.8) rotate(-90)" font-size="7.3" fill="#555" text-anchor="end">3/9/2021</text>
<line x1="1437.6" x2="1437.6" y1="646.5" y2="648.3" stroke="#333" stroke-width="0.9"/>
<text transform="translate(1440.3 648.8) rotate(-90)" font-size="7.3" fill="#555" text-anchor="end">3/11/2021</text>
<line x1="1453.5" x2="1453.5" y1="646.5" y2="648.3" stroke="#333" stroke-width="0.9"/>
<text transform="translate(1456.2 648.8) rotate(-90)" font-size="7.3" fill="#555" text-anchor="end">3/13/2021</text>
<line x1="1469.3" x2="1469.3" y1="646.5" y2="648.3" stroke="#333" stroke-width="0.9"/>
<text transform="translate(1472.0 648.8) rotate(-90)" font-size="7.3" fill="#555" text-anchor="end">3/15/2021</text>
<line x1="1485.2" x2="1485.2" y1="646.5" y2="648.3" stroke="#333" stroke-width="0.9"/>
<text transform="translate(1487.9 648.8) rotate(-90)" font-size="7.3" fill="#555" text-anchor="end">3/17/2021</text>
<line x1="1501.0" x2="1501.0" y1="646.5" y2="648.3" stroke="#333" stroke-width="0.9"/>
<text transform="translate(1503.7 648.8) rotate(-90)" font-size="7.3" fill="#555" text-anchor="end">3/19/2021</text>
<line x1="1516.9" x2="1516.9" y1="646.5" y2="648.3" stroke="#333" stroke-width="0.9"/>
<text transform="translate(1519.6 648.8) rotate(-90)" font-size="7.3" fill="#555" text-anchor="end">3/21/2021</text>
<text x="1527" y="639.5" font-size="6.4" fill="#888" text-anchor="end">Max: 0.00 %</text>
<line x1="1290.7" x2="1528.6" y1="703.2" y2="703.2" stroke="#dedede" stroke-width="0.7"/>
<line x1="1290.7" x2="1528.6" y1="714.1" y2="714.1" stroke="#dedede" stroke-width="0.7"/>
<line x1="1290.7" x2="1528.6" y1="725.1" y2="725.1" stroke="#dedede" stroke-width="0.7"/>
<line x1="1290.7" x2="1528.6" y1="736.0" y2="736.0" stroke="#dedede" stroke-width="0.7"/>
<line x1="1290.7" x2="1528.6" y1="747.0" y2="747.0" stroke="#dedede" stroke-width="0.7"/>
<line x1="1290.7" x2="1528.6" y1="757.9" y2="757.9" stroke="#dedede" stroke-width="0.7"/>
<line x1="1290.7" x2="1528.6" y1="699.6" y2="699.6" stroke="#dedede" stroke-width="0.7"/>
<line x1="1296.9" x2="1296.9" y1="699.6" y2="761.1" stroke="#d4d4d4" stroke-width="0.7"/>
<line x1="1316.2" x2="1316.2" y1="699.6" y2="761.1" stroke="#d4d4d4" stroke-width="0.7"/>
<line x1="1336.1" x2="1336.1" y1="699.6" y2="761.1" stroke="#d4d4d4" stroke-width="0.7"/>
<line x1="1355.4" x2="1355.4" y1="699.6" y2="761.1" stroke="#d4d4d4" stroke-width="0.7"/>
<line x1="1375.3" x2="1375.3" y1="699.6" y2="761.1" stroke="#d4d4d4" stroke-width="0.7"/>
<line x1="1396.6" x2="1396.6" y1="699.6" y2="761.1" stroke="#d4d4d4" stroke-width="0.7"/>
<line x1="1416.0" x2="1416.0" y1="699.6" y2="761.1" stroke="#d4d4d4" stroke-width="0.7"/>
<line x1="1436.5" x2="1436.5" y1="699.6" y2="761.1" stroke="#d4d4d4" stroke-width="0.7"/>
<line x1="1456.0" x2="1456.0" y1="699.6" y2="761.1" stroke="#d4d4d4" stroke-width="0.7"/>
<line x1="1476.7" x2="1476.7" y1="699.6" y2="761.1" stroke="#d4d4d4" stroke-width="0.7"/>
<line x1="1496.7" x2="1496.7" y1="699.6" y2="761.1" stroke="#d4d4d4" stroke-width="0.7"/>
<line x1="1515.4" x2="1515.4" y1="699.6" y2="761.1" stroke="#d4d4d4" stroke-width="0.7"/>
<text x="1297" y="716.9" font-size="15.6" fill="#555">365 days</text>
<line x1="1290.7" x2="1290.7" y1="699.6" y2="761.8" stroke="#333" stroke-width="1"/>
<line x1="1290.2" x2="1529.1" y1="761.1" y2="761.1" stroke="#333" stroke-width="1.5"/>
<line x1="1528.6" x2="1528.6" y1="699.6" y2="761.1" stroke="#c8323c" stroke-width="1"/>
<line x1="1290.7" x2="1528.6" y1="757.9" y2="757.9" stroke="#cc3a42" stroke-width="0.9"/>
<path d="M1289.1000000000001 757.9 l1.8 -1.8 l1.8 1.8 l-1.8 1.8 z" fill="#b8222c"/>
<path d="M1526.0 757.9 l1.8 -1.8 l1.8 1.8 l-1.8 1.8 z" fill="#b8222c"/>
<line x1="1287.5" x2="1290.7" y1="703.2" y2="703.2" stroke="#333" stroke-width="0.9"/>
<line x1="1528.6" x2="1531.6" y1="703.2" y2="703.2" stroke="#c8323c" stroke-width="0.9"/>
<text x="1284" y="705.9" font-size="7.3" fill="#555" text-anchor="end">1.00</text>
<text x="1535.3" y="705.9" font-size="7.3" fill="#555">1.00</text>
<line x1="1287.5" x2="1290.7" y1="714.1" y2="714.1" stroke="#333" stroke-width="0.9"/>
<line x1="1528.6" x2="1531.6" y1="714.1" y2="714.1" stroke="#c8323c" stroke-width="0.9"/>
<text x="1284" y="716.8" font-size="7.3" fill="#555" text-anchor="end">0.80</text>
<text x="1535.3" y="716.8" font-size="7.3" fill="#555">0.80</text>
<line x1="1287.5" x2="1290.7" y1="725.1" y2="725.1" stroke="#333" stroke-width="0.9"/>
<line x1="1528.6" x2="1531.6" y1="725.1" y2="725.1" stroke="#c8323c" stroke-width="0.9"/>
<text x="1284" y="727.8" font-size="7.3" fill="#555" text-anchor="end">0.60</text>
<text x="1535.3" y="727.8" font-size="7.3" fill="#555">0.60</text>
<line x1="1287.5" x2="1290.7" y1="736.0" y2="736.0" stroke="#333" stroke-width="0.9"/>
<line x1="1528.6" x2="1531.6" y1="736.0" y2="736.0" stroke="#c8323c" stroke-width="0.9"/>
<text x="1284" y="738.7" font-size="7.3" fill="#555" text-anchor="end">0.40</text>
<text x="1535.3" y="738.7" font-size="7.3" fill="#555">0.40</text>
<line x1="1287.5" x2="1290.7" y1="747.0" y2="747.0" stroke="#333" stroke-width="0.9"/>
<line x1="1528.6" x2="1531.6" y1="747.0" y2="747.0" stroke="#c8323c" stroke-width="0.9"/>
<text x="1284" y="749.7" font-size="7.3" fill="#555" text-anchor="end">0.20</text>
<text x="1535.3" y="749.7" font-size="7.3" fill="#555">0.20</text>
<line x1="1287.5" x2="1290.7" y1="757.9" y2="757.9" stroke="#333" stroke-width="0.9"/>
<line x1="1528.6" x2="1531.6" y1="757.9" y2="757.9" stroke="#c8323c" stroke-width="0.9"/>
<text x="1284" y="760.6" font-size="7.3" fill="#555" text-anchor="end">0.00</text>
<text x="1535.3" y="760.6" font-size="7.3" fill="#555">0.00</text>
<text transform="translate(1264.5 730.8) rotate(-90)" font-size="7.3" fill="#555" text-anchor="middle">%</text>
<text transform="translate(1562.3 730.0) rotate(-90)" font-size="7.3" fill="#555" text-anchor="middle">#</text>
<line x1="1296.9" x2="1296.9" y1="761.1" y2="762.9" stroke="#333" stroke-width="0.9"/>
<text transform="translate(1299.6 766.0) rotate(-90)" font-size="7.3" fill="#555" text-anchor="end">4/1/2020</text>
<line x1="1316.2" x2="1316.2" y1="761.1" y2="762.9" stroke="#333" stroke-width="0.9"/>
<text transform="translate(1318.9 766.0) rotate(-90)" font-size="7.3" fill="#555" text-anchor="end">5/1/2020</text>
<line x1="1336.1" x2="1336.1" y1="761.1" y2="762.9" stroke="#333" stroke-width="0.9"/>
<text transform="translate(1338.8 766.0) rotate(-90)" font-size="7.3" fill="#555" text-anchor="end">6/1/2020</text>
<line x1="1355.4" x2="1355.4" y1="761.1" y2="762.9" stroke="#333" stroke-width="0.9"/>
<text transform="translate(1358.1 766.0) rotate(-90)" font-size="7.3" fill="#555" text-anchor="end">7/1/2020</text>
<line x1="1375.3" x2="1375.3" y1="761.1" y2="762.9" stroke="#333" stroke-width="0.9"/>
<text transform="translate(1378.0 766.0) rotate(-90)" font-size="7.3" fill="#555" text-anchor="end">8/1/2020</text>
<line x1="1396.6" x2="1396.6" y1="761.1" y2="762.9" stroke="#333" stroke-width="0.9"/>
<text transform="translate(1399.3 766.0) rotate(-90)" font-size="7.3" fill="#555" text-anchor="end">9/1/2020</text>
<line x1="1416.0" x2="1416.0" y1="761.1" y2="762.9" stroke="#333" stroke-width="0.9"/>
<text transform="translate(1418.7 766.0) rotate(-90)" font-size="7.3" fill="#555" text-anchor="end">10/1/2020</text>
<line x1="1436.5" x2="1436.5" y1="761.1" y2="762.9" stroke="#333" stroke-width="0.9"/>
<text transform="translate(1439.2 766.0) rotate(-90)" font-size="7.3" fill="#555" text-anchor="end">11/1/2020</text>
<line x1="1456.0" x2="1456.0" y1="761.1" y2="762.9" stroke="#333" stroke-width="0.9"/>
<text transform="translate(1458.7 766.0) rotate(-90)" font-size="7.3" fill="#555" text-anchor="end">12/1/2020</text>
<line x1="1476.7" x2="1476.7" y1="761.1" y2="762.9" stroke="#333" stroke-width="0.9"/>
<text transform="translate(1479.4 766.0) rotate(-90)" font-size="7.3" fill="#555" text-anchor="end">1/1/2021</text>
<line x1="1496.7" x2="1496.7" y1="761.1" y2="762.9" stroke="#333" stroke-width="0.9"/>
<text transform="translate(1499.4 766.0) rotate(-90)" font-size="7.3" fill="#555" text-anchor="end">2/1/2021</text>
<line x1="1515.4" x2="1515.4" y1="761.1" y2="762.9" stroke="#333" stroke-width="0.9"/>
<text transform="translate(1518.1 766.0) rotate(-90)" font-size="7.3" fill="#555" text-anchor="end">3/1/2021</text>
<text x="1291.8" y="754.1" font-size="6.4" fill="#888">Max: 0.00 %</text>
<rect x="1261.2" y="825.5" width="8.8" height="8.3" fill="#d71920"/>
<text x="1273.7" y="834.3" font-size="9.6" fill="#555">Alarms</text>
<text x="1392" y="834.3" font-size="9.6" fill="#aaa" text-anchor="end">(#)</text>
<line x1="1261.2" x2="1392" y1="837.3" y2="837.3" stroke="#f1f1f1" stroke-width="1"/>
<rect x="1402" y="825.5" width="8.8" height="8.3" fill="#14284f"/>
<text x="1414.5" y="834.3" font-size="9.6" fill="#555">Response Time Index</text>
<text x="1533" y="834.3" font-size="9.6" fill="#aaa" text-anchor="end">(%)</text>
<line x1="1402" x2="1533" y1="837.3" y2="837.3" stroke="#f1f1f1" stroke-width="1"/>
<rect x="1261.2" y="845.7" width="8.8" height="8.3" fill="#3aa39b"/>
<text x="1273.7" y="854.5" font-size="9.6" fill="#555">CPU Load Index</text>
<text x="1392" y="854.5" font-size="9.6" fill="#aaa" text-anchor="end">(%)</text>
<line x1="1261.2" x2="1392" y1="857.5" y2="857.5" stroke="#f1f1f1" stroke-width="1"/>
<rect x="1402" y="845.7" width="8.8" height="8.3" fill="#e5579d"/>
<text x="1414.5" y="854.5" font-size="9.6" fill="#555">Traffic Index</text>
<text x="1533" y="854.5" font-size="9.6" fill="#aaa" text-anchor="end">(%)</text>
<line x1="1402" x2="1533" y1="857.5" y2="857.5" stroke="#f1f1f1" stroke-width="1"/>
</svg><!--/GRAPHS-->
<!--MENU--><div class="abs" style="left:1580px;top:50px;width:15.5px;height:23px;border:1px dotted #666"></div>
<div class="abs" style="left:1424px;top:53px;width:170px;height:351px;background:#fff;box-shadow:0 1px 4px rgba(0,0,0,.35)"></div>
<div class="t" style="left:1480.5px;top:59.5px;font-size:10.6px;color:#3a9fd2">Device Menu</div>
<div class="abs" style="left:1424px;top:71.2px;width:170px;height:1px;background:#dcdcdc"></div>
<div class="mi" style="top:77.7px;font-size:10.7px;color:#555">Scan Now</div>
<svg class="abs" style="left:1429.5px;top:78.2px" width="10.4" height="10.4" viewBox="0 0 10.4 10.4"><path d="M1.2 4.6 A4 4 0 0 1 8.4 2.6" fill="none" stroke="#444" stroke-width="1.6"/><path d="M9.6 0.6 L9.6 4.2 L6 4.2 Z" fill="#444"/><path d="M8.8 5.6 A4 4 0 0 1 1.6 7.6" fill="none" stroke="#444" stroke-width="1.6"/><path d="M0.4 9.6 L0.4 6 L4 6 Z" fill="#444"/></svg>
<div class="mi" style="top:95.7px;font-size:10.7px;color:#555">Details...</div>
<svg class="abs" style="left:1429.5px;top:96.2px" width="10.4" height="10.4" viewBox="0 0 10.4 10.4"><circle cx="4.5" cy="4.5" r="3.6" fill="none" stroke="#444" stroke-width="1.5"/><path d="M7.2 7.2 L10 10" stroke="#444" stroke-width="1.8"/></svg>
<div class="mi" style="top:113.1px;font-size:10.7px;color:#555">Edit</div>
<svg class="abs" style="left:1429.5px;top:113.6px" width="10.4" height="10.4" viewBox="0 0 10.4 10.4"><path d="M7.2 5.6 L7.2 8.4 Q7.2 9.3 6.3 9.3 L1.6 9.3 Q0.7 9.3 0.7 8.4 L0.7 3 Q0.7 2.1 1.6 2.1 L5 2.1" fill="none" stroke="#555" stroke-width="1"/><path d="M3.6 5.6 L8.2 0.8 L9.6 2.2 L5 7 L3.3 7.3 Z" fill="#555"/></svg>
<svg class="abs" style="left:1584px;top:114.6px" width="7" height="10" viewBox="0 0 7 10"><path d="M1.2 1 L5.4 5 L1.2 9" fill="none" stroke="#444" stroke-width="2.3"/></svg>
<div class="mi" style="top:131.7px;font-size:10.7px;color:#555">Add Sensor...</div>
<svg class="abs" style="left:1429.5px;top:132.2px" width="10.4" height="10.4" viewBox="0 0 10.4 10.4"><circle cx="5" cy="5" r="4.8" fill="#444"/><path d="M5 2.3 L5 7.7 M2.3 5 L7.7 5" stroke="#fff" stroke-width="1.7"/></svg>
<div class="mi" style="top:150.5px;font-size:10.7px;color:#555">Auto-Discovery</div>
<svg class="abs" style="left:1429.5px;top:151.0px" width="10.4" height="10.4" viewBox="0 0 10.4 10.4"><path d="M3.4 1.1 A4.2 4.2 0 1 0 6.6 1.1" fill="none" stroke="#555" stroke-width="1.1"/></svg>
<svg class="abs" style="left:1584px;top:152.0px" width="7" height="10" viewBox="0 0 7 10"><path d="M1.2 1 L5.4 5 L1.2 9" fill="none" stroke="#444" stroke-width="2.3"/></svg>
<div class="mi" style="top:169.7px;font-size:10.7px;color:#3a9fd2">Create Device Template...</div>
<svg class="abs" style="left:1429.5px;top:170.2px" width="10.4" height="10.4" viewBox="0 0 10.4 10.4"><path d="M0.7 3.4 L5.8 3.4 L5.8 9.6 L0.7 9.6 Z" fill="none" stroke="#3a9fd2" stroke-width="1"/><path d="M3.3 3.2 L3.3 0.7 L6.8 0.7 L9.5 3.2 L9.5 7.3 L6 7.3" fill="none" stroke="#3a9fd2" stroke-width="1"/><path d="M6.6 0.9 L6.6 3.4 L9.3 3.4" fill="none" stroke="#3a9fd2" stroke-width="0.9"/></svg>
<div class="mi" style="top:187.3px;font-size:10.7px;color:#555">Recommend Now</div>
<svg class="abs" style="left:1429.5px;top:187.8px" width="10.4" height="10.4" viewBox="0 0 10.4 10.4"><circle cx="5" cy="5" r="4.8" fill="#444"/><path d="M5 4.4 L5 7.8" stroke="#fff" stroke-width="1.6"/><circle cx="5" cy="2.6" r="0.95" fill="#fff"/><path d="M3.6 7.8 L6.4 7.8 M3.8 4.6 L5 4.6" stroke="#fff" stroke-width="0.9"/></svg>
<div class="mi" style="top:204.9px;font-size:10.7px;color:#555">Sort Alphabetically</div>
<svg class="abs" style="left:1429.5px;top:205.4px" width="10.4" height="10.4" viewBox="0 0 10.4 10.4"><path d="M2.2 0.4 L2.2 8.2" stroke="#444" stroke-width="1.2"/><path d="M0.2 6.8 L2.2 9.8 L4.2 6.8 Z" fill="#444"/><text x="5.6" y="4.4" font-size="5" font-weight="bold" fill="#444" font-family="Liberation Sans">A</text><text x="5.8" y="9.8" font-size="5" font-weight="bold" fill="#444" font-family="Liberation Sans">Z</text></svg>
<div class="mi" style="top:223.3px;font-size:10.7px;color:#555">Delete...</div>
<svg class="abs" style="left:1429.5px;top:223.8px" width="10.4" height="10.4" viewBox="0 0 10.4 10.4"><path d="M0.8 2.2 L9.2 2.2 M3.6 2.2 L3.6 0.8 L6.4 0.8 L6.4 2.2" fill="none" stroke="#555" stroke-width="1"/><path d="M1.8 2.4 L1.8 9.4 L8.2 9.4 L8.2 2.4" fill="none" stroke="#555" stroke-width="1"/><path d="M3.8 4 L3.8 7.8 M5 4 L5 7.8 M6.2 4 L6.2 7.8" stroke="#555" stroke-width="0.7"/></svg>
<div class="mi" style="top:242.8px;font-size:10.7px;color:#555">Clone...</div>
<svg class="abs" style="left:1429.5px;top:243.3px" width="10.4" height="10.4" viewBox="0 0 10.4 10.4"><path d="M0.7 3.4 L5.8 3.4 L5.8 9.6 L0.7 9.6 Z" fill="none" stroke="#555" stroke-width="1"/><path d="M3.3 3.2 L3.3 0.7 L6.8 0.7 L9.5 3.2 L9.5 7.3 L6 7.3" fill="none" stroke="#555" stroke-width="1"/><path d="M6.6 0.9 L6.6 3.4 L9.3 3.4" fill="none" stroke="#555" stroke-width="0.9"/></svg>
<div class="mi" style="top:260.3px;font-size:10.7px;color:#555">Move</div>
<svg class="abs" style="left:1429.5px;top:260.8px" width="10.4" height="10.4" viewBox="0 0 10.4 10.4"><path d="M0.2 2.6 L2 2.6 C4 2.6 5.4 7.4 7.6 7.4 L8.2 7.4" fill="none" stroke="#444" stroke-width="1.3"/><path d="M0.2 7.4 L2 7.4 C4 7.4 5.4 2.6 7.6 2.6 L8.2 2.6" fill="none" stroke="#444" stroke-width="1.3"/><path d="M7.8 0.6 L10.2 2.6 L7.8 4.6 Z M7.8 5.4 L10.2 7.4 L7.8 9.4 Z" fill="#444"/></svg>
<svg class="abs" style="left:1584px;top:261.8px" width="7" height="10" viewBox="0 0 7 10"><path d="M1.2 1 L5.4 5 L1.2 9" fill="none" stroke="#444" stroke-width="2.3"/></svg>
<div class="mi" style="top:278.9px;font-size:10.7px;color:#555">Pause</div>
<svg class="abs" style="left:1429.5px;top:279.4px" width="10.4" height="10.4" viewBox="0 0 10.4 10.4"><rect x="0.6" y="1" width="2.2" height="8" fill="#444"/><rect x="4.6" y="1" width="2.2" height="8" fill="#444"/></svg>
<svg class="abs" style="left:1584px;top:280.4px" width="7" height="10" viewBox="0 0 7 10"><path d="M1.2 1 L5.4 5 L1.2 9" fill="none" stroke="#444" stroke-width="2.3"/></svg>
<div class="mi" style="top:299.4px;font-size:10.7px;color:#555">Priority/Favorite</div>
<svg class="abs" style="left:1429.5px;top:299.9px" width="10.4" height="10.4" viewBox="0 0 10.4 10.4"><path d="M5 0.3 L6.45 3.5 L10 3.9 L7.35 6.3 L8.1 9.75 L5 8 L1.9 9.75 L2.65 6.3 L0 3.9 L3.55 3.5 Z" fill="none" stroke="#444" stroke-width="0.9"/><path d="M5 0.3 L5 8 L1.9 9.75 L2.65 6.3 L0 3.9 L3.55 3.5 Z" fill="#444"/></svg>
<svg class="abs" style="left:1584px;top:300.9px" width="7" height="10" viewBox="0 0 7 10"><path d="M1.2 1 L5.4 5 L1.2 9" fill="none" stroke="#444" stroke-width="2.3"/></svg>
<div class="mi" style="top:318.8px;font-size:10.7px;color:#555">Historic Data</div>
<svg class="abs" style="left:1429.5px;top:319.3px" width="10.4" height="10.4" viewBox="0 0 10.4 10.4"><ellipse cx="5" cy="2" rx="4.6" ry="1.9" fill="#444"/><path d="M0.4 3.4 Q5 6.4 9.6 3.4 L9.6 5 Q5 8 0.4 5 Z" fill="#444"/><path d="M0.4 6.2 Q5 9.2 9.6 6.2 L9.6 7.8 Q5 10.8 0.4 7.8 Z" fill="#444"/></svg>
<svg class="abs" style="left:1584px;top:320.3px" width="7" height="10" viewBox="0 0 7 10"><path d="M1.2 1 L5.4 5 L1.2 9" fill="none" stroke="#444" stroke-width="2.3"/></svg>
<div class="mi" style="top:336.3px;font-size:10.7px;color:#555">Device Tools</div>
<svg class="abs" style="left:1429.5px;top:336.8px" width="10.4" height="10.4" viewBox="0 0 10.4 10.4"><path d="M3.4 2.2 L3.4 0.9 L6.6 0.9 L6.6 2.2" fill="none" stroke="#444" stroke-width="1.1"/><rect x="0.2" y="2.2" width="9.6" height="3.2" rx="0.6" fill="#444"/><rect x="0.2" y="6" width="9.6" height="3.4" rx="0.6" fill="#444"/><rect x="4" y="4.8" width="2" height="1.8" fill="#fff"/></svg>
<svg class="abs" style="left:1584px;top:337.8px" width="7" height="10" viewBox="0 0 7 10"><path d="M1.2 1 L5.4 5 L1.2 9" fill="none" stroke="#444" stroke-width="2.3"/></svg>
<div class="mi" style="top:354.3px;font-size:10.7px;color:#555">Find Duplicates...</div>
<svg class="abs" style="left:1429.5px;top:354.8px" width="10.4" height="10.4" viewBox="0 0 10.4 10.4"><circle cx="4.5" cy="4.5" r="3.6" fill="none" stroke="#444" stroke-width="1.5"/><path d="M7.2 7.2 L10 10" stroke="#444" stroke-width="1.8"/></svg>
<div class="mi" style="top:372.3px;font-size:10.7px;color:#555">Send Link by Email</div>
<svg class="abs" style="left:1429.5px;top:372.8px" width="10.4" height="10.4" viewBox="0 0 10.4 10.4"><rect x="0.6" y="1.6" width="8.8" height="7" rx="0.6" fill="none" stroke="#555" stroke-width="1"/><path d="M0.8 2.2 L5 5.8 L9.2 2.2" fill="none" stroke="#555" stroke-width="1"/></svg>
<div class="mi" style="top:389.6px;font-size:10.7px;color:#555">Add Ticket</div>
<svg class="abs" style="left:1429.5px;top:390.1px" width="10.4" height="10.4" viewBox="0 0 10.4 10.4"><g transform="rotate(-38 5 5)"><rect x="0.2" y="2.6" width="9.6" height="4.8" rx="0.5" fill="#444"/><rect x="0.8" y="0.8" width="8.4" height="1.2" fill="#444"/></g></svg>
<div class="abs" style="left:1424px;top:128px;width:170px;height:1px;background:#dcdcdc"></div>
<div class="abs" style="left:1424px;top:220px;width:170px;height:1px;background:#dcdcdc"></div>
<div class="abs" style="left:1424px;top:275.5px;width:170px;height:1px;background:#dcdcdc"></div>
<div class="abs" style="left:1424px;top:294.5px;width:170px;height:1px;background:#dcdcdc"></div>
<div class="abs" style="left:1424px;top:183px;width:170px;height:1px;background:#3ea2cf"></div>
<svg class="abs" style="left:1508px;top:176px" width="32" height="42" viewBox="1508 176 32 42"><path d="M1513 180.2 L1513 207.3 L1519.3 202.1 L1523.8 212.5 L1528.2 210.3 L1523.8 200.2 L1533.6 200.2 Z" fill="#fff" fill-opacity="0.92" stroke="#111" stroke-width="1" stroke-linejoin="miter"/></svg><!--/MENU-->

</body>
</html>
